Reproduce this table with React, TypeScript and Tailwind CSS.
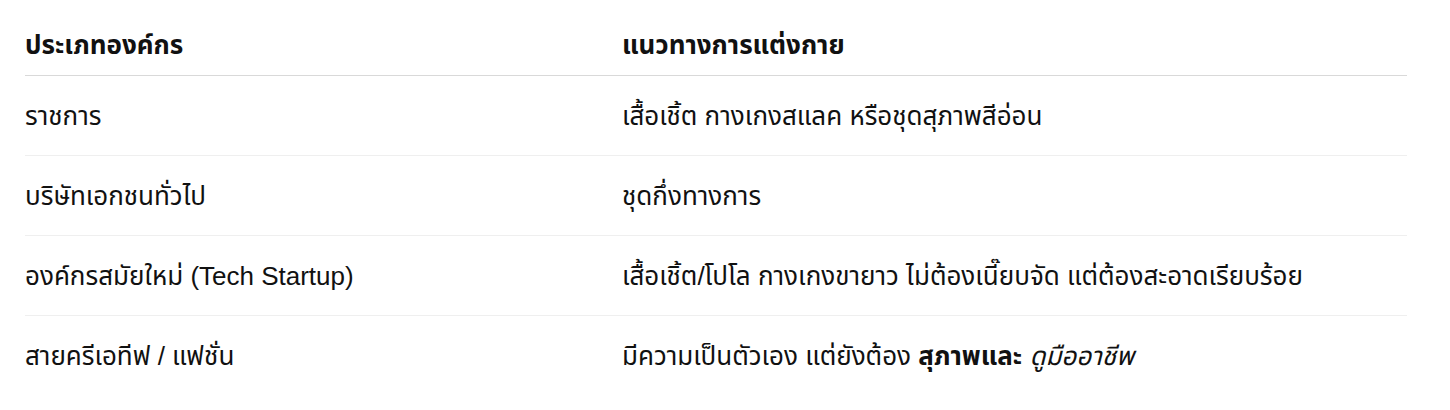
const rows = [
  { org: "ราชการ", dress: <>เสื้อเชิ้ต กางเกงสแลค หรือชุดสุภาพสีอ่อน</> },
  { org: "บริษัทเอกชนทั่วไป", dress: <>ชุดกึ่งทางการ</> },
  {
    org: "องค์กรสมัยใหม่ (Tech Startup)",
    dress: <>เสื้อเชิ้ต/โปโล กางเกงขายาว ไม่ต้องเนี๊ยบจัด แต่ต้องสะอาดเรียบร้อย</>,
  },
  {
    org: "สายครีเอทีฟ / แฟชั่น",
    dress: (
      <>
        มีความเป็นตัวเอง แต่ยังต้อง <strong className="font-bold">สุภาพและ</strong>{" "}
        <em className="italic">ดูมืออาชีพ</em>
      </>
    ),
  },
];

export default function App() {
  return (
    <div className="min-h-[410px] bg-white pt-[15px] font-['Liberation_Sans','Noto_Sans_Thai','Noto_Sans',sans-serif] text-[26px] leading-[32px] text-[#111111]">
      <div className="ml-[25px] w-[1382px]">
        <div className="grid h-[61px] grid-cols-[597px_1fr] items-center border-b border-[#d9d9d9] pb-[1px] font-bold">
          <div>ประเภทองค์กร</div>
          <div>แนวทางการแต่งกาย</div>
        </div>
        {rows.map((row, i) => (
          <div
            key={i}
            className={`grid h-[80px] grid-cols-[597px_1fr] items-center ${
              i < rows.length - 1 ? "border-b border-[#efefef]" : ""
            }`}
          >
            <div>{row.org}</div>
            <div>{row.dress}</div>
          </div>
        ))}
      </div>
    </div>
  );
}
